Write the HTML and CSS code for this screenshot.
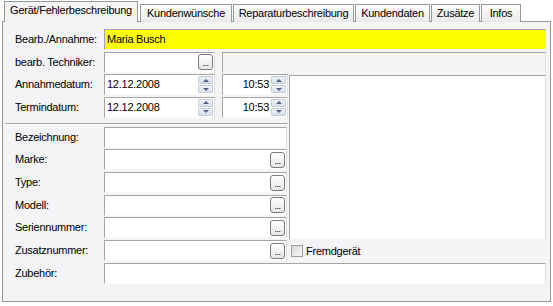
FILE: index.html
```html
<!DOCTYPE html>
<html lang="de">
<head>
    <meta charset="UTF-8">
    <title>Gerät/Fehlerbeschreibung</title>
    <link rel="stylesheet" href="styles.css">
</head>
<body>
    <div class="tabs">
        <div class="tab active t-geraet">Gerät/Fehlerbeschreibung</div>
        <div class="tab t-wuensche">Kundenwünsche</div>
        <div class="tab t-reparatur">Reparaturbeschreibung</div>
        <div class="tab t-kunde">Kundendaten</div>
        <div class="tab t-zusatz">Zusätze</div>
        <div class="tab t-infos">Infos</div>
    </div>

    <div class="page">
        <div class="row">
            <div class="label">Bearb./Annahme:</div>
            <div class="field yellow grow"><span class="text">Maria Busch</span></div>
        </div>
        <div class="row">
            <div class="label">bearb. Techniker:</div>
            <div class="field short"><span class="text"></span><span class="dots">...</span></div>
            <div class="field readonly grow"></div>
        </div>

        <div class="middle">
            <div class="left-col">
                <div class="row">
                    <div class="label">Annahmedatum:</div>
                    <div class="field short"><span class="text">12.12.2008</span><span class="spin"><i class="up"></i><i class="down"></i></span></div>
                    <div class="field time"><span class="text right">10:53</span><span class="spin"><i class="up"></i><i class="down"></i></span></div>
                </div>
                <div class="row">
                    <div class="label">Termindatum:</div>
                    <div class="field short"><span class="text">12.12.2008</span><span class="spin"><i class="up"></i><i class="down"></i></span></div>
                    <div class="field time"><span class="text right">10:53</span><span class="spin"><i class="up"></i><i class="down"></i></span></div>
                </div>
                <div class="separator"></div>
                <div class="row">
                    <div class="label">Bezeichnung:</div>
                    <div class="field wide"></div>
                </div>
                <div class="row">
                    <div class="label">Marke:</div>
                    <div class="field wide"><span class="text"></span><span class="dots">...</span></div>
                </div>
                <div class="row">
                    <div class="label">Type:</div>
                    <div class="field wide"><span class="text"></span><span class="dots">...</span></div>
                </div>
                <div class="row">
                    <div class="label">Modell:</div>
                    <div class="field wide"><span class="text"></span><span class="dots">...</span></div>
                </div>
                <div class="row">
                    <div class="label">Seriennummer:</div>
                    <div class="field wide"><span class="text"></span><span class="dots">...</span></div>
                </div>
            </div>
            <div class="notes"></div>
        </div>

        <div class="row">
            <div class="label">Zusatznummer:</div>
            <div class="field wide"><span class="text"></span><span class="dots">...</span></div>
            <div class="check"><span class="box"></span>Fremdgerät</div>
        </div>
        <div class="row">
            <div class="label">Zubehör:</div>
            <div class="field grow"></div>
        </div>
    </div>
</body>
</html>
```

FILE: styles.css
```css
body {
    margin: 0;
    background-color: #fff;
    font-family: "Liberation Sans", Arial, sans-serif;
    font-size: 11px;
    letter-spacing: -0.25px;
    color: #000;
}
.tabs {
    display: flex;
    align-items: flex-end;
    height: 22px;
    margin: 0 0 -1px 4px;
}
.tab {
    box-sizing: border-box;
    height: 18px;
    line-height: 16px;
    margin-right: 1px;
    border: 1px solid #919b9c;
    border-bottom: none;
    background: linear-gradient(#fefefe, #e9e9ea);
    text-align: center;
    white-space: nowrap;
}
.tab.active {
    position: relative;
    z-index: 1;
    height: 21px;
    line-height: 17px;
    margin-right: 2px;
    background: #f4f3f5;
}
.t-geraet { width: 134px; }
.t-wuensche { width: 92px; }
.t-reparatur { width: 121px; }
.t-kunde { width: 75px; }
.t-zusatz { width: 49px; }
.t-infos { width: 40px; }
.page {
    box-sizing: border-box;
    height: 281px;
    margin: 0 2px 0 2px;
    padding: 7px 4px 0 0;
    border: 1px solid #919b9c;
    background-color: #f4f3f5;
    display: flex;
    flex-direction: column;
    gap: 1.67px;
}
.row {
    display: flex;
    height: 21px;
    flex-shrink: 0;
}
.label {
    box-sizing: border-box;
    width: 101px;
    padding-left: 12px;
    line-height: 21px;
    white-space: nowrap;
}
.field {
    box-sizing: border-box;
    display: flex;
    align-items: center;
    height: 21px;
    border: 1px solid;
    border-color: #a5a5a7 #dedee0 #f9f9f9 #a5a5a7;
    background-color: #fff;
}
.field .text {
    flex: 1;
    padding-left: 2px;
    line-height: 19px;
    white-space: nowrap;
}
.field .text.right {
    text-align: right;
    padding-right: 2px;
}
.grow {
    flex: 1;
}
.short {
    width: 111px;
    margin-right: 7px;
}
.time {
    width: 66px;
}
.wide {
    width: 183px;
}
.yellow {
    background-color: #ffff00;
}
.readonly {
    background-color: #f4f3f5;
}
.dots {
    box-sizing: border-box;
    width: 15px;
    height: 16px;
    margin-right: 1px;
    border: 1px solid #7b7b7b;
    border-radius: 3px;
    background: linear-gradient(#ffffff, #e6e6e6);
    font-size: 9px;
    line-height: 17px;
    text-align: center;
    letter-spacing: -0.5px;
}
.spin {
    display: flex;
    flex-direction: column;
    gap: 1px;
    width: 15px;
    margin-right: 1px;
}
.spin i {
    box-sizing: border-box;
    height: 8px;
    border: 1px solid #c5cddb;
    border-radius: 1px;
    background: linear-gradient(#eef1f7, #d9e0ec);
    display: flex;
    align-items: center;
    justify-content: center;
}
.spin i::after {
    content: "";
    border-left: 3px solid transparent;
    border-right: 3px solid transparent;
}
.spin .up::after {
    border-bottom: 3px solid #4d6185;
}
.spin .down::after {
    border-top: 3px solid #4d6185;
}
.middle {
    display: flex;
    flex-shrink: 0;
}
.left-col {
    width: 286px;
    display: flex;
    flex-direction: column;
    gap: 1.67px;
}
.separator {
    height: 0;
    margin: 3px 1px 0.5px 2px;
    border-top: 1px solid #a5a5a7;
    border-bottom: 1px solid #fff;
}
.notes {
    flex: 1;
    margin: 1px 0 -2px 0;
    border: 1px solid;
    border-color: #a5a5a7 #dedee0 #f0f0f0 #a5a5a7;
    background-color: #fff;
}
.check {
    display: flex;
    align-items: center;
    padding-left: 4px;
    white-space: nowrap;
}
.box {
    box-sizing: border-box;
    width: 12px;
    height: 12px;
    margin-right: 3px;
    border: 1px solid #9c9c9c;
    background: linear-gradient(135deg, #d8d8d8, #f7f7f7);
}
```
